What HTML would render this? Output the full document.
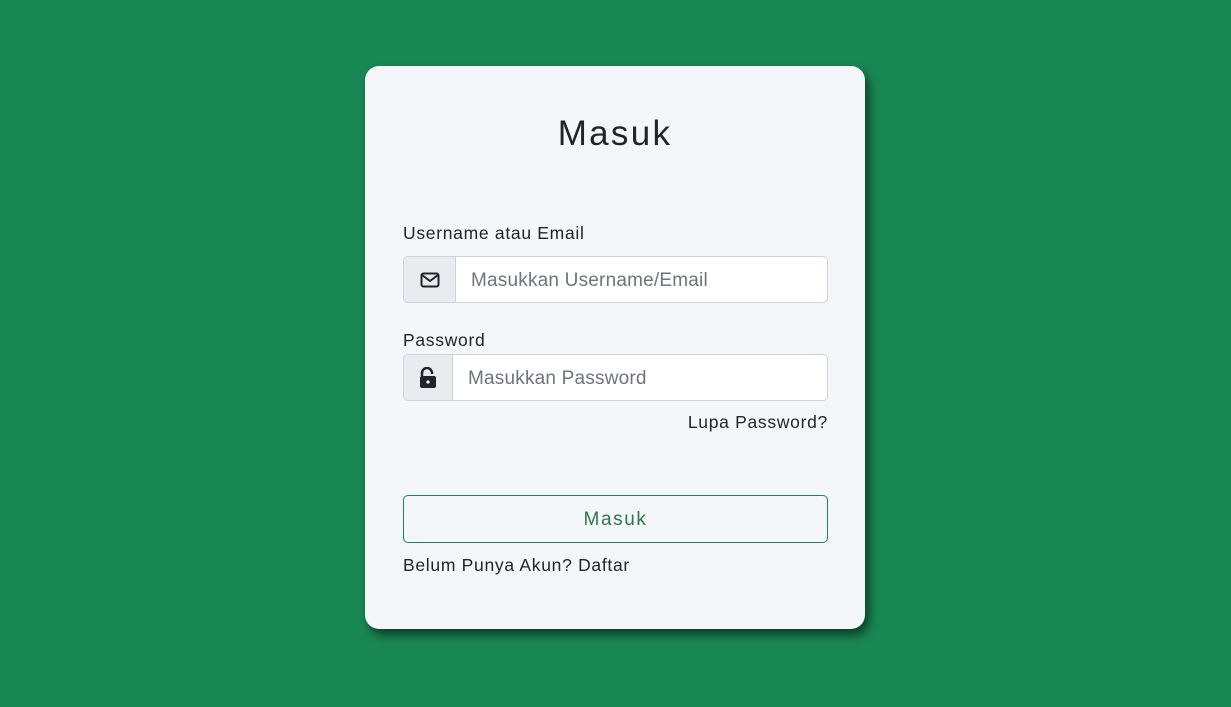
<!DOCTYPE html>
<html><head><meta charset="utf-8"><style>
*{box-sizing:border-box;margin:0;padding:0}
body{width:1231px;height:707px;background:#198754;font-family:"Liberation Sans",sans-serif;position:relative;overflow:hidden}
.card{position:absolute;left:365px;top:66px;width:500px;height:563px;background:#f4f6f9;border-radius:14px;box-shadow:4px 6px 10px rgba(0,0,0,.55)}
h1{position:absolute;left:0;width:100%;text-align:center;font-weight:400;font-size:35px;letter-spacing:2.3px;color:#212529}
.lbl{position:absolute;left:38px;font-size:17.5px;letter-spacing:0.7px;color:#212529}
.grp{position:absolute;left:38px;width:425px;height:47px;border:1px solid #ced4da;border-radius:5px;background:#fff;overflow:hidden}
.ic{position:absolute;left:0;top:0;height:100%;background:#e9ecef;border-right:1px solid #ced4da;display:flex;align-items:center;justify-content:center}
.ph{position:absolute;top:1px;line-height:45px;font-size:19px;color:#6c757d;letter-spacing:0.2px}
.btn{position:absolute;left:38px;top:429px;width:425px;height:48px;border:1px solid #198754;border-radius:5px;text-align:center;line-height:48px;font-size:19px;letter-spacing:1.6px;color:#2b7a4b}
</style></head><body>
<div class="card">
<h1 style="top:48px">Masuk</h1>
<div class="lbl" style="top:157px">Username atau Email</div>
<div class="grp" style="top:190px"><div class="ic" style="width:52px"><svg width="20" height="16" viewBox="0 0 20 16"><rect x="1.5" y="1.5" width="17" height="13" rx="2" fill="none" stroke="#212529" stroke-width="2"/><path d="M2 3l8 6 8-6" fill="none" stroke="#212529" stroke-width="2"/></svg></div><div class="ph" style="left:67px">Masukkan Username/Email</div></div>
<div class="lbl" style="top:264px">Password</div>
<div class="grp" style="top:288px"><div class="ic" style="width:49px"><svg width="18" height="22" viewBox="0 0 18 22"><path d="M3 9V6a5 5 0 0 1 10 0v1" fill="none" stroke="#212529" stroke-width="2.5"/><rect x="1" y="9" width="16" height="12" rx="2" fill="#212529"/><circle cx="9" cy="15" r="1.6" fill="#fff"/></svg></div><div class="ph" style="left:64px">Masukkan Password</div></div>
<div class="lbl" style="top:346px;left:auto;right:37px">Lupa Password?</div>
<div class="btn">Masuk</div>
<div class="lbl" style="top:489px">Belum Punya Akun? Daftar</div>
</div>
</body></html>
